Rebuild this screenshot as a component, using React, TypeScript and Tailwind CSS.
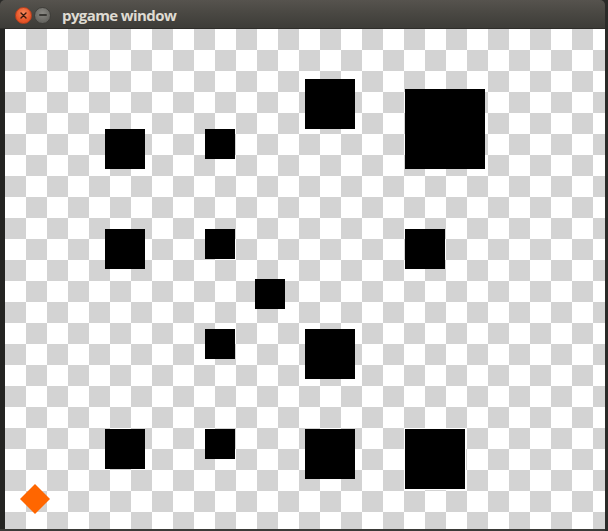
const squares: [number, number, number][] = [
  // x, y, size in canvas coordinates
  [300, 50, 50],
  [400, 60, 80],
  [100, 100, 40],
  [200, 100, 30],
  [100, 200, 40],
  [200, 200, 30],
  [400, 200, 40],
  [250, 250, 30],
  [200, 300, 30],
  [300, 300, 50],
  [100, 400, 40],
  [200, 400, 30],
  [300, 400, 50],
];

function TitleBar() {
  return (
    <div className="flex h-[29px] items-center rounded-t-[5px] border-b border-[#2e2d2a] bg-[linear-gradient(180deg,#56534e_0%,#4a4843_45%,#3d3c38_100%)] pl-[15px]">
      <div className="flex items-center gap-[2px] pt-[2px]">
        <div className="flex h-[17px] w-[17px] items-center justify-center rounded-full border border-[#b8401e] bg-[radial-gradient(circle_at_50%_35%,#f68a5d_0%,#ea5a2c_55%,#d9481f_100%)]">
          <svg width="7" height="7" viewBox="0 0 7 7">
            <path d="M1 1 L6 6 M6 1 L1 6" stroke="#3a1a0e" strokeWidth="1.4" strokeLinecap="round" />
          </svg>
        </div>
        <div className="flex h-[17px] w-[17px] items-center justify-center rounded-full border border-[#3f3e3a] bg-[radial-gradient(circle_at_50%_35%,#8a8984_0%,#6c6b66_60%,#5a5955_100%)]">
          <div className="h-[2px] w-[8px] rounded-sm bg-[#3a3935]" />
        </div>
      </div>
      <span className="ml-[11px] pt-[2px] font-['Open_Sans',sans-serif] text-[15px] font-bold tracking-[-0.6px] text-[#dfdbd2]">
        pygame window
      </span>
    </div>
  );
}

function Canvas() {
  return (
    <svg width="600" height="500" viewBox="0 0 600 500" shapeRendering="crispEdges" className="block">
      <defs>
        <pattern id="checker" width="42" height="42" patternUnits="userSpaceOnUse">
          <rect width="42" height="42" fill="#ffffff" />
          <rect x="21" y="0" width="21" height="21" fill="#d3d3d3" />
          <rect x="0" y="21" width="21" height="21" fill="#d3d3d3" />
        </pattern>
      </defs>
      <rect width="600" height="500" fill="url(#checker)" />
      {squares.map(([x, y, s], i) => (
        <rect key={i} x={x} y={y} width={s} height={s} fill="#000000" />
      ))}
      <rect x="399" y="399" width="62" height="62" fill="#ffffff" />
      <rect x="400" y="400" width="60" height="60" fill="#000000" />
      <polygon points="30,455 45,470 30,485 15,470" fill="#ff6600" shapeRendering="auto" />
    </svg>
  );
}

export default function App() {
  return (
    <div className="h-[531px] w-[608px] overflow-hidden bg-[#2a2a28]">
      <div className="flex h-full w-[605px] flex-col">
        <TitleBar />
        <div className="flex">
          <div className="w-[5px] bg-[#242422]" />
          <Canvas />
        </div>
        <div className="h-[2px] bg-[#3a3a37]" />
      </div>
    </div>
  );
}
